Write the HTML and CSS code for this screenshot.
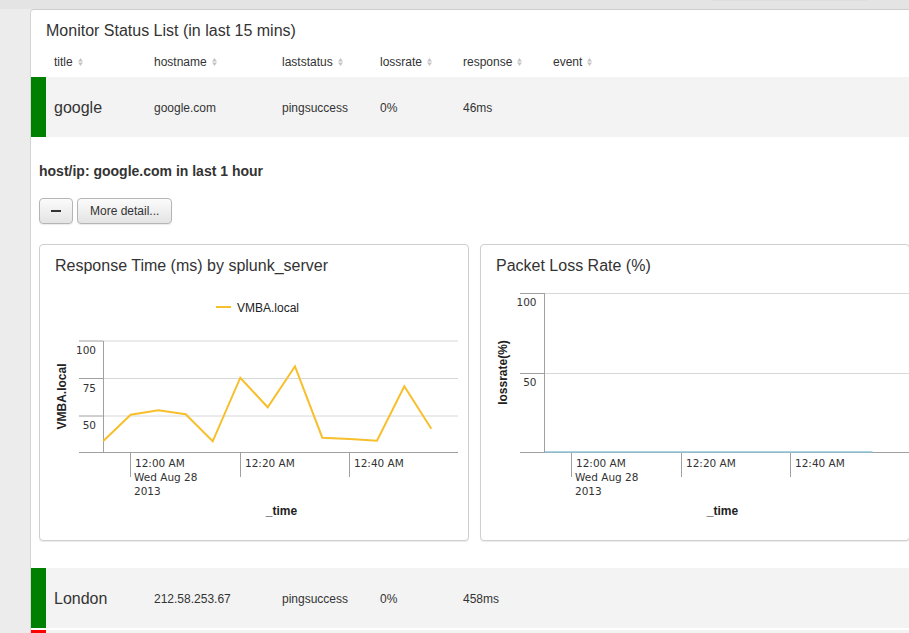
FILE: index.html
```html
<!DOCTYPE html>
<html>
<head>
<meta charset="utf-8">
<link rel="stylesheet" href="styles.css">
</head>
<body>
<div class="topbar"><div class="topbar-tab"></div></div>
<div class="main">
  <h2 class="panel-title">Monitor Status List (in last 15 mins)</h2>
  <div class="thead grid">
    <span></span>
    <span class="th">title<svg class="sort" viewBox="0 0 5 8"><polygon points="0,3.4 2.5,0 5,3.4"/><polygon points="0,4.6 2.5,8 5,4.6"/></svg></span>
    <span class="th">hostname<svg class="sort" viewBox="0 0 5 8"><polygon points="0,3.4 2.5,0 5,3.4"/><polygon points="0,4.6 2.5,8 5,4.6"/></svg></span>
    <span class="th">laststatus<svg class="sort" viewBox="0 0 5 8"><polygon points="0,3.4 2.5,0 5,3.4"/><polygon points="0,4.6 2.5,8 5,4.6"/></svg></span>
    <span class="th">lossrate<svg class="sort" viewBox="0 0 5 8"><polygon points="0,3.4 2.5,0 5,3.4"/><polygon points="0,4.6 2.5,8 5,4.6"/></svg></span>
    <span class="th">response<svg class="sort" viewBox="0 0 5 8"><polygon points="0,3.4 2.5,0 5,3.4"/><polygon points="0,4.6 2.5,8 5,4.6"/></svg></span>
    <span class="th">event<svg class="sort" viewBox="0 0 5 8"><polygon points="0,3.4 2.5,0 5,3.4"/><polygon points="0,4.6 2.5,8 5,4.6"/></svg></span>
  </div>

  <div class="row grid">
    <span class="bar ok"></span>
    <span class="cell name">google</span>
    <span class="cell">google.com</span>
    <span class="cell">pingsuccess</span>
    <span class="cell">0%</span>
    <span class="cell">46ms</span>
    <span class="cell"></span>
  </div>

  <div class="detail">
    <h3 class="detail-title">host/ip: google.com in last 1 hour</h3>
    <div class="buttons">
      <button class="btn btn-minus"><span class="minus"></span></button>
      <button class="btn">More detail...</button>
    </div>
    <div class="charts">
      <div class="chart">
        <div class="chart-title">Response Time (ms) by splunk_server</div>
        <svg class="plot" width="428" height="263" viewBox="0 0 428 263">
          <line x1="176" y1="31" x2="191" y2="31" stroke="#f7bf2b" stroke-width="2"/>
          <text x="197" y="35.5" class="legend">VMBA.local</text>
          <line x1="63" y1="65" x2="418" y2="65" class="grid-line"/>
          <line x1="63" y1="102.5" x2="418" y2="102.5" class="grid-line"/>
          <line x1="63" y1="140" x2="418" y2="140" class="grid-line"/>
          <line x1="39" y1="65" x2="63" y2="65" class="tick"/>
          <line x1="39" y1="102.5" x2="63" y2="102.5" class="tick"/>
          <line x1="39" y1="140" x2="63" y2="140" class="tick"/>
          <line x1="39" y1="176.5" x2="418" y2="176.5" class="axis"/>
          <line x1="63.5" y1="65" x2="63.5" y2="177" class="axis"/>
          <text x="56" y="78" class="ylab" text-anchor="end">100</text>
          <text x="56" y="115.5" class="ylab" text-anchor="end">75</text>
          <text x="56" y="152.5" class="ylab" text-anchor="end">50</text>
          <text transform="translate(25.5,120.5) rotate(-90)" text-anchor="middle" class="atitle">VMBA.local</text>
          <line x1="90.5" y1="177" x2="90.5" y2="201" class="axis"/>
          <line x1="200.5" y1="177" x2="200.5" y2="201" class="axis"/>
          <line x1="309.5" y1="177" x2="309.5" y2="201" class="axis"/>
          <text x="95" y="190.5" class="xlab">12:00 AM</text>
          <text x="94" y="205" class="xlab">Wed Aug 28</text>
          <text x="94" y="219" class="xlab">2013</text>
          <text x="205" y="190.5" class="xlab">12:20 AM</text>
          <text x="314" y="190.5" class="xlab">12:40 AM</text>
          <text x="241.5" y="239" text-anchor="middle" class="atitle">_time</text>
          <polyline fill="none" stroke="#f7bf2b" stroke-width="2" stroke-linejoin="miter"
            points="63.3,165 90.7,138.7 118.3,134.3 145.7,138.3 172.7,165.3 200.3,101.7 227.7,131.3 255,90.3 282.3,161.7 309.7,163 337,164.7 364.3,110.3 391.3,152.7"/>
        </svg>
      </div>
      <div class="chart">
        <div class="chart-title">Packet Loss Rate (%)</div>
        <svg class="plot" width="428" height="263" viewBox="0 0 428 263">
          <line x1="63" y1="17.5" x2="428" y2="17.5" class="grid-line"/>
          <line x1="63" y1="97.5" x2="428" y2="97.5" class="grid-line"/>
          <line x1="39" y1="17.5" x2="63" y2="17.5" class="tick"/>
          <line x1="39" y1="97.5" x2="63" y2="97.5" class="tick"/>
          <line x1="39" y1="176.5" x2="428" y2="176.5" class="axis"/>
          <line x1="63.5" y1="17" x2="63.5" y2="177" class="axis"/>
          <text x="55.5" y="30" class="ylab" text-anchor="end">100</text>
          <text x="55.5" y="110" class="ylab" text-anchor="end">50</text>
          <text transform="translate(25.5,96.5) rotate(-90)" text-anchor="middle" class="atitle">lossrate(%)</text>
          <line x1="90.5" y1="177" x2="90.5" y2="201" class="axis"/>
          <line x1="200.5" y1="177" x2="200.5" y2="201" class="axis"/>
          <line x1="309.5" y1="177" x2="309.5" y2="201" class="axis"/>
          <text x="95" y="190.5" class="xlab">12:00 AM</text>
          <text x="94" y="205" class="xlab">Wed Aug 28</text>
          <text x="94" y="219" class="xlab">2013</text>
          <text x="205" y="190.5" class="xlab">12:20 AM</text>
          <text x="314" y="190.5" class="xlab">12:40 AM</text>
          <text x="241.5" y="239" text-anchor="middle" class="atitle">_time</text>
          <line x1="64" y1="176" x2="391.5" y2="176" stroke="#8ec3d6" stroke-width="1.5"/>
        </svg>
      </div>
    </div>
  </div>

  <div class="row grid">
    <span class="bar ok"></span>
    <span class="cell name">London</span>
    <span class="cell">212.58.253.67</span>
    <span class="cell">pingsuccess</span>
    <span class="cell">0%</span>
    <span class="cell">458ms</span>
    <span class="cell"></span>
  </div>
  <div class="row grid">
    <span class="bar bad"></span>
  </div>
</div>
</body>
</html>
```

FILE: styles.css
```css
html, body {
  margin: 0;
  padding: 0;
  height: 633px;
  overflow: hidden;
}
body {
  background: #ececec;
  font-family: "Liberation Sans", Arial, sans-serif;
  color: #333;
}
.topbar {
  height: 9px;
  background: #e4e4e4;
  display: flex;
  justify-content: flex-end;
  padding-right: 42px;
}
.topbar-tab {
  width: 155px;
  height: 0;
  border-bottom: 1px solid #dedede;
}
.main {
  margin-left: 30px;
  background: #fff;
  border-left: 1px solid #d4d4d4;
  border-top: 1px solid #cdcdcd;
  border-top-left-radius: 4px;
  height: 700px;
  overflow: hidden;
}
.panel-title {
  margin: 0;
  padding: 11px 0 7px 15px;
  font-size: 16px;
  line-height: 20px;
  font-weight: normal;
  color: #333;
}
.grid {
  display: grid;
  grid-template-columns: 15px 100px 128px 98px 83px 90px 1fr;
}
.thead {
  padding: 7px 0 8px;
  font-size: 12px;
  line-height: 14px;
}
.th {
  padding-left: 8px;
  display: flex;
  align-items: center;
}
.sort {
  width: 5px;
  height: 8px;
  margin-left: 5px;
  fill: #c4c4c4;
}
.row {
  height: 60px;
  background: #f3f3f3;
  margin-bottom: 2px;
  align-items: center;
  font-size: 12px;
}
.bar {
  align-self: stretch;
}
.bar.ok { background: #008000; }
.bar.bad { background: #ff0000; }
.cell {
  padding-left: 8px;
  padding-top: 1px;
}
.cell.name {
  font-size: 16px;
  padding-top: 2px;
}
.detail {
  padding: 24px 0 0 8px;
  margin-bottom: 27px;
}
.detail-title {
  margin: 0;
  font-size: 14px;
  line-height: 17px;
  font-weight: bold;
  color: #333;
}
.buttons {
  margin-top: 18px;
  display: flex;
  gap: 4px;
}
.btn {
  height: 26px;
  padding: 0 12px;
  border: 1px solid #b5b5b5;
  border-radius: 4px;
  background: linear-gradient(#fbfbfb, #e4e4e4);
  font-family: "Liberation Sans", Arial, sans-serif;
  font-size: 12px;
  color: #333;
  box-shadow: 0 1px 1px rgba(0,0,0,0.08);
}
.btn-minus {
  width: 34px;
  padding: 0;
  display: flex;
  align-items: center;
  justify-content: center;
}
.minus {
  width: 10px;
  height: 2px;
  background: #333;
}
.charts {
  margin-top: 20px;
  display: flex;
  gap: 11px;
}
.chart {
  flex: none;
  box-sizing: border-box;
  width: 430px;
  height: 297px;
  border: 1px solid #cfcfcf;
  border-radius: 4px;
  box-shadow: 0 1px 1px rgba(0,0,0,0.08);
  background: #fff;
}
.chart-title {
  padding: 11px 15px 0;
  font-size: 16px;
  line-height: 20px;
  color: #333;
}
.plot {
  display: block;
}
.grid-line {
  stroke: #d8d8d8;
  stroke-width: 1;
}
.tick, .axis {
  stroke: #a0a0a0;
  stroke-width: 1;
}
.legend {
  font-family: "Liberation Sans", Arial, sans-serif;
  font-size: 12px;
  fill: #222;
}
.ylab, .xlab {
  font-family: "DejaVu Sans", Verdana, sans-serif;
  font-size: 10.5px;
  fill: #333;
}
.atitle {
  font-family: "Liberation Sans", Arial, sans-serif;
  font-size: 12px;
  font-weight: bold;
  fill: #222;
}
```
